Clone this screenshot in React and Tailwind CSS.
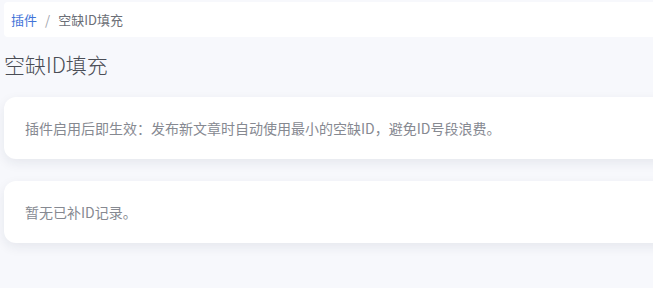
export default function App() {
  return (
    <div
      className="min-h-[288px] w-[653px] overflow-hidden bg-[#f7f8fc]"
      style={{ fontFamily: "'Noto Sans CJK SC', 'Noto Sans', sans-serif" }}
    >
      <div className="w-[700px] pl-[4px] pt-[2px]">
        {/* Breadcrumb */}
        <div className="flex h-[35px] items-center gap-[8px] rounded-[4px] bg-white pl-[7px] text-[13px]">
          <span className="text-[#4273d8]">插件</span>
          <span className="text-[#a0a3ab]">/</span>
          <span className="text-[#6b6e76]">空缺ID填充</span>
        </div>

        {/* Title */}
        <h1 className="mt-[12px] text-[21px] leading-[30px] font-light text-[#4a4d55]">空缺ID填充</h1>

        {/* Info card */}
        <div className="mt-[18px] flex h-[62px] items-center rounded-[12px] bg-white pl-[21px] shadow-[0_4px_12px_rgba(30,40,70,0.08)]">
          <p className="text-[14px] text-[#868991]">
            插件启用后即生效：发布新文章时自动使用最小的空缺ID，避免ID号段浪费。
          </p>
        </div>

        {/* Records card */}
        <div className="mt-[22px] flex h-[62px] items-center rounded-[12px] bg-white pl-[21px] shadow-[0_4px_12px_rgba(30,40,70,0.08)]">
          <p className="text-[14px] text-[#868991]">暂无已补ID记录。</p>
        </div>
      </div>
    </div>
  );
}
